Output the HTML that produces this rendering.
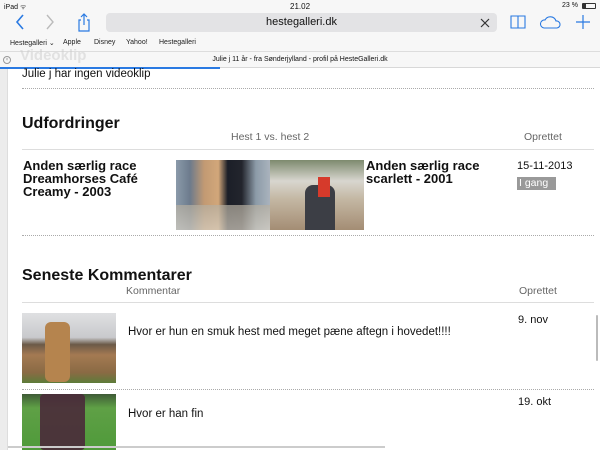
<!DOCTYPE html>
<html><head><meta charset="utf-8"><style>
*{margin:0;padding:0;box-sizing:border-box}
body{width:600px;height:450px;overflow:hidden;background:#fff;font-family:"Liberation Sans",Helvetica,Arial,sans-serif;position:relative;color:#111}
.a{position:absolute;white-space:nowrap}
.chrome{position:absolute;left:0;top:0;width:600px;height:68px;background:#f7f7f7;border-bottom:1px solid #d8d8d8}
.url{position:absolute;left:106px;top:13px;width:391px;height:19px;background:#e3e3e5;border-radius:4px;font-size:11px;text-align:center;line-height:19px;color:#111}
.bm{font-size:7px;color:#222;top:39px}
.b{font-weight:bold;font-size:13px;line-height:13px;color:#111}
.dot{position:absolute;height:0;border-top:1px dotted #aaa}
.sol{position:absolute;height:1px;background:#ddd}
.hd{font-size:10.5px;color:#666}
</style></head><body>
<div class="a" style="left:0;top:68px;width:8px;height:382px;background:#ececec;border-right:1px solid #ddd"></div>
<div class="chrome">
 <div class="a" style="left:4px;top:3px;font-size:7px">iPad <span style="color:#444">ᯤ</span></div>
 <div class="a" style="left:290px;top:2px;font-size:8px">21.02</div>
 <div class="a" style="left:562px;top:2px;font-size:7px">23 %</div>
 <div class="a" style="left:582px;top:3px;width:14px;height:6px;border:1px solid #333;border-radius:1px"><div style="width:3px;height:4px;background:#333"></div></div>
 <svg class="a" style="left:14px;top:14px" width="12" height="16"><path d="M9 1L3 8L9 15" stroke="#2a7ae2" stroke-width="1.6" fill="none"/></svg>
 <svg class="a" style="left:44px;top:14px" width="12" height="16"><path d="M3 1L9 8L3 15" stroke="#bbb" stroke-width="1.4" fill="none"/></svg>
 <svg class="a" style="left:76px;top:12px" width="16" height="20"><path d="M5 8H3V19H13V8H11M8 13V2M5 5L8 2L11 5" stroke="#2a7ae2" stroke-width="1.2" fill="none"/></svg>
 <div class="url">hestegalleri.dk</div>
 <svg class="a" style="left:480px;top:18px" width="10" height="10"><path d="M1 1L9 9M9 1L1 9" stroke="#333" stroke-width="1.2"/></svg>
 <svg class="a" style="left:510px;top:14px" width="16" height="16"><path d="M1 2H15V14H1Z M8 2V14" stroke="#2a7ae2" stroke-width="1.1" fill="none"/></svg>
 <svg class="a" style="left:539px;top:14px" width="22" height="16"><path d="M5 14H18A3.5 3.5 0 0 0 17 7A6 6 0 0 0 6 6A4 4 0 0 0 5 14Z" stroke="#2a7ae2" stroke-width="1.1" fill="none"/></svg>
 <svg class="a" style="left:575px;top:14px" width="16" height="16"><path d="M8 1V15M1 8H15" stroke="#2a7ae2" stroke-width="1.2"/></svg>
 <div class="a bm" style="left:10px">Hestegalleri ⌄</div>
 <div class="a bm" style="left:63px">Apple</div>
 <div class="a bm" style="left:94px">Disney</div>
 <div class="a bm" style="left:126px">Yahoo!</div>
 <div class="a bm" style="left:159px">Hestegalleri</div>
 <div class="a" style="left:0;top:51px;width:600px;height:1px;background:#ddd"></div>
 <div class="a" style="left:3px;top:56px;width:8px;height:8px;border:1px solid #999;border-radius:50%;font-size:5px;text-align:center;line-height:6px;color:#999">×</div>
 <div class="a" style="left:20px;top:47px;font-size:15px;font-weight:bold;color:#ccc;opacity:.5">Videoklip</div>
 <div class="a" style="left:0;top:56px;width:600px;text-align:center;font-size:7px">Julie j 11 år - fra Sønderjylland - profil på HesteGalleri.dk</div>
</div>
<div class="a" style="left:0;top:67px;width:220px;height:2px;background:#2a7ae2"></div>
<div class="a" style="left:22px;top:68px;font-size:11.5px">Julie j har ingen videoklip</div>
<div class="dot" style="left:22px;top:88px;width:572px"></div>

<div class="a" style="left:22px;top:115px;font-size:16px;font-weight:bold">Udfordringer</div>
<div class="a hd" style="left:231px;top:131px">Hest 1 vs. hest 2</div>
<div class="a hd" style="left:524px;top:131px">Oprettet</div>
<div class="sol" style="left:22px;top:149px;width:572px"></div>
<div class="a b" style="left:23px;top:159px">Anden særlig race<br>Dreamhorses Café<br>Creamy - 2003</div>
<div class="a" style="left:176px;top:160px;width:94px;height:70px;background:linear-gradient(90deg,#8a9aaa 0,#6d7b8c 15%,#c29a73 30%,#d2a77a 45%,#1c1f28 55%,#23252d 70%,#8c9ba8 85%,#aab3bd);"></div>
<div class="a" style="left:176px;top:205px;width:94px;height:25px;background:linear-gradient(#b5aea0,#d6cfc2);opacity:.7"></div>
<div class="a" style="left:270px;top:160px;width:94px;height:70px;background:linear-gradient(#7d8a6e 0,#d8d6cf 30%,#c4b8a4 55%,#a48d74 100%)"></div>
<div class="a" style="left:305px;top:185px;width:30px;height:45px;background:#3c3e45;border-radius:8px 8px 0 0"></div>
<div class="a" style="left:318px;top:177px;width:12px;height:20px;background:#d63a2b"></div>
<div class="a b" style="left:366px;top:159px">Anden særlig race<br>scarlett - 2001</div>
<div class="a" style="left:517px;top:160px;font-size:11px">15-11-2013</div>
<div class="a" style="left:517px;top:177px;width:39px;height:13px;background:#999;color:#fff;font-size:10.5px;line-height:13px;padding-left:2px">I gang</div>
<div class="dot" style="left:22px;top:235px;width:572px"></div>

<div class="a" style="left:22px;top:267px;font-size:16px;font-weight:bold">Seneste Kommentarer</div>
<div class="a hd" style="left:126px;top:285px">Kommentar</div>
<div class="a hd" style="left:519px;top:285px">Oprettet</div>
<div class="sol" style="left:22px;top:302px;width:572px"></div>
<div class="a" style="left:22px;top:313px;width:94px;height:70px;background:linear-gradient(#dfe0e2 0,#c8c9cc 35%,#6b5a48 45%,#a47a52 60%,#8a6a44 85%,#5d7c3a 100%)"></div>
<div class="a" style="left:45px;top:322px;width:25px;height:60px;background:#b5844e;border-radius:6px"></div>
<div class="a" style="left:128px;top:326px;font-size:11.5px">Hvor er hun en smuk hest med meget pæne aftegn i hovedet!!!!</div>
<div class="a" style="left:518px;top:314px;font-size:11px">9. nov</div>
<div class="dot" style="left:22px;top:389px;width:572px"></div>
<div class="a" style="left:22px;top:394px;width:94px;height:56px;background:linear-gradient(#3f5a36 0,#5fa046 25%,#4f9a3a 100%)"></div>
<div class="a" style="left:40px;top:394px;width:45px;height:56px;background:#4a2a3a;border-radius:4px;opacity:.9"></div>
<div class="a" style="left:128px;top:408px;font-size:11.5px">Hvor er han fin</div>
<div class="a" style="left:518px;top:396px;font-size:11px">19. okt</div>
<div class="a" style="left:8px;top:446px;width:377px;height:2px;background:#ccc"></div>
<div class="a" style="left:596px;top:315px;width:2px;height:46px;background:#bbb;border-radius:1px"></div>
</body></html>
